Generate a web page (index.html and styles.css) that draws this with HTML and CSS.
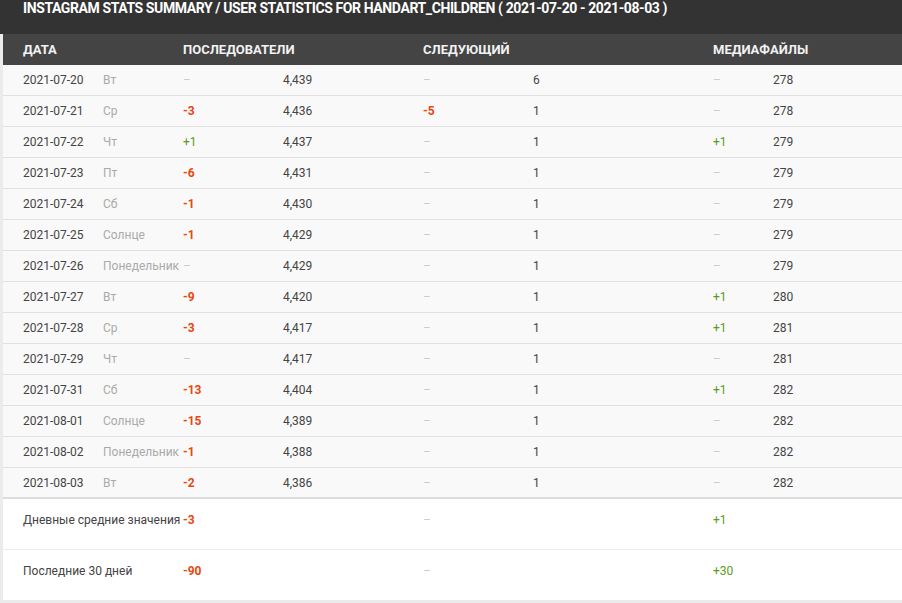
FILE: index.html
```html
<!DOCTYPE html>
<html lang="ru">
<head>
    <meta charset="UTF-8">
    <title>Instagram Stats Summary</title>
    <link rel="stylesheet" href="styles.css">
</head>
<body>
    <div class="panel">
        <div class="title">INSTAGRAM STATS SUMMARY / USER STATISTICS FOR HANDART_CHILDREN ( 2021-07-20 - 2021-08-03 )</div>
        <div class="row head">
            <div>ДАТА</div><div></div>
            <div>ПОСЛЕДОВАТЕЛИ</div><div></div>
            <div>СЛЕДУЮЩИЙ</div><div></div>
            <div>МЕДИАФАЙЛЫ</div><div></div>
        </div>

        <div class="row day">
            <div>2021-07-20</div><div class="wd">Вт</div>
            <div class="zero">–</div><div>4,439</div>
            <div class="zero">–</div><div>6</div>
            <div class="zero">–</div><div>278</div>
        </div>
        <div class="row day">
            <div>2021-07-21</div><div class="wd">Ср</div>
            <div class="neg">-3</div><div>4,436</div>
            <div class="neg">-5</div><div>1</div>
            <div class="zero">–</div><div>278</div>
        </div>
        <div class="row day">
            <div>2021-07-22</div><div class="wd">Чт</div>
            <div class="pos">+1</div><div>4,437</div>
            <div class="zero">–</div><div>1</div>
            <div class="pos">+1</div><div>279</div>
        </div>
        <div class="row day">
            <div>2021-07-23</div><div class="wd">Пт</div>
            <div class="neg">-6</div><div>4,431</div>
            <div class="zero">–</div><div>1</div>
            <div class="zero">–</div><div>279</div>
        </div>
        <div class="row day">
            <div>2021-07-24</div><div class="wd">Сб</div>
            <div class="neg">-1</div><div>4,430</div>
            <div class="zero">–</div><div>1</div>
            <div class="zero">–</div><div>279</div>
        </div>
        <div class="row day">
            <div>2021-07-25</div><div class="wd">Солнце</div>
            <div class="neg">-1</div><div>4,429</div>
            <div class="zero">–</div><div>1</div>
            <div class="zero">–</div><div>279</div>
        </div>
        <div class="row day">
            <div>2021-07-26</div><div class="wd">Понедельник</div>
            <div class="zero">–</div><div>4,429</div>
            <div class="zero">–</div><div>1</div>
            <div class="zero">–</div><div>279</div>
        </div>
        <div class="row day">
            <div>2021-07-27</div><div class="wd">Вт</div>
            <div class="neg">-9</div><div>4,420</div>
            <div class="zero">–</div><div>1</div>
            <div class="pos">+1</div><div>280</div>
        </div>
        <div class="row day">
            <div>2021-07-28</div><div class="wd">Ср</div>
            <div class="neg">-3</div><div>4,417</div>
            <div class="zero">–</div><div>1</div>
            <div class="pos">+1</div><div>281</div>
        </div>
        <div class="row day">
            <div>2021-07-29</div><div class="wd">Чт</div>
            <div class="zero">–</div><div>4,417</div>
            <div class="zero">–</div><div>1</div>
            <div class="zero">–</div><div>281</div>
        </div>
        <div class="row day">
            <div>2021-07-31</div><div class="wd">Сб</div>
            <div class="neg">-13</div><div>4,404</div>
            <div class="zero">–</div><div>1</div>
            <div class="pos">+1</div><div>282</div>
        </div>
        <div class="row day">
            <div>2021-08-01</div><div class="wd">Солнце</div>
            <div class="neg">-15</div><div>4,389</div>
            <div class="zero">–</div><div>1</div>
            <div class="zero">–</div><div>282</div>
        </div>
        <div class="row day">
            <div>2021-08-02</div><div class="wd">Понедельник</div>
            <div class="neg">-1</div><div>4,388</div>
            <div class="zero">–</div><div>1</div>
            <div class="zero">–</div><div>282</div>
        </div>
        <div class="row day last">
            <div>2021-08-03</div><div class="wd">Вт</div>
            <div class="neg">-2</div><div>4,386</div>
            <div class="zero">–</div><div>1</div>
            <div class="zero">–</div><div>282</div>
        </div>

        <div class="row total">
            <div class="label">Дневные средние значения</div><div></div>
            <div class="neg">-3</div><div></div>
            <div class="zero">–</div><div></div>
            <div class="pos">+1</div><div></div>
        </div>
        <div class="row total">
            <div class="label">Последние 30 дней</div><div></div>
            <div class="neg">-90</div><div></div>
            <div class="zero">–</div><div></div>
            <div class="pos">+30</div><div></div>
        </div>
    </div>
</body>
</html>
```

FILE: styles.css
```css
body {
    margin: 0;
    background: #ebebeb;
    font-family: Roboto, 'Liberation Sans', sans-serif;
    font-size: 12px;
    color: #444;
}
.panel {
    margin-left: 3px;
    background: white;
}
.title {
    height: 34px;
    background: #333;
    color: white;
    font-weight: bold;
    font-size: 14px;
    letter-spacing: -0.4px;
    line-height: 16px;
    margin-left: -3px;
    padding-left: 23px;
}
.row {
    display: grid;
    grid-template-columns: 80px 80px 100px 140px 110px 180px 60px 1fr;
    padding-left: 20px;
    align-items: center;
    white-space: nowrap;
}
.head {
    height: 31px;
    background: #444;
    color: #f2f2f2;
    font-size: 13px;
    font-weight: bold;
}
.day {
    height: 30px;
    background: #f9f9f9;
    border-bottom: 1px solid #e0e0e0;
}
.day.last {
    height: 29px;
    border-bottom: 2px solid #dcdcdc;
}
.total {
    height: 50px;
    align-items: start;
    line-height: 42px;
    border-bottom: 1px solid #ececec;
}
.total:last-child {
    border-bottom: 2px solid #ebebeb;
}
.wd {
    color: #aaa;
}
.zero {
    color: #ccc;
}
.neg {
    color: #e8470e;
    font-weight: bold;
}
.pos {
    color: #5a9c1a;
}
```
